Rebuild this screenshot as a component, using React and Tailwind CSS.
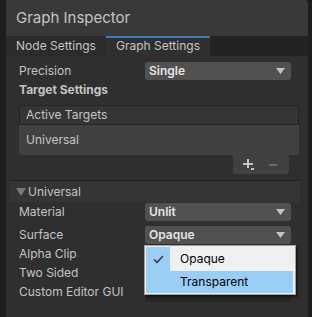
import React from "react";

function Caret() {
  return (
    <svg width="9" height="6" viewBox="0 0 9 6" className="shrink-0">
      <path d="M0 0 H9 L4.5 6 Z" fill="#c4c4c4" />
    </svg>
  );
}

function Dropdown({ value }) {
  return (
    <div className="flex h-[18px] w-[146px] items-center justify-between rounded-[3px] bg-[#515151] pl-[4px] pr-[6px] text-[12px] font-semibold text-[#e4e4e4]">
      <span>{value}</span>
      <Caret />
    </div>
  );
}

function Row({ label, children }) {
  return (
    <div className="flex h-[20px] items-center pl-[13px] pr-[17px]">
      <span className="w-[126px] text-[12px] text-[#c4c4c4]">{label}</span>
      {children}
    </div>
  );
}

export default function App() {
  return (
    <div
      className="flex h-[317px] w-[312px] bg-[#1e1e1e] pl-[6px] pr-[4px]"
      style={{ fontFamily: "Inter, 'Noto Sans', sans-serif" }}
    >
      <div className="relative flex flex-1 flex-col overflow-hidden rounded-tr-[4px] bg-[#2f2f2f]">
        {/* title */}
        <div className="flex h-[36px] items-center bg-[#393939] pl-[10px] text-[15px] text-[#c4c4c4]">
          Graph Inspector
        </div>

        {/* tabs */}
        <div className="flex h-[20px] bg-[#232323] text-[12px] text-[#c4c4c4]">
          <div className="flex w-[100px] items-center justify-center bg-[#2b2b2b]">Node Settings</div>
          <div className="flex w-[104px] items-center justify-center border-t-2 border-[#3a79bb] bg-[#2f2f2f] pb-[2px]">
            Graph Settings
          </div>
        </div>

        <div className="mt-[6px] flex h-[18px] items-center pl-[13px] pr-[17px]">
          <span className="w-[126px] text-[12px] text-[#c4c4c4]">Precision</span>
          <Dropdown value="Single" />
        </div>
        <div className="flex h-[20px] items-center pl-[13px] text-[12px] font-bold text-[#c4c4c4]">
          Target Settings
        </div>

        {/* active targets list */}
        <div className="ml-[13px] mr-[9px] mt-[5px] flex flex-col">
          <div className="flex h-[19px] items-center rounded-t-[3px] border border-b-0 border-[#232323] bg-[#353535] pl-[6px] text-[12px] text-[#c4c4c4]">
            Active Targets
          </div>
          <div className="flex h-[31px] items-center rounded-b-[3px] border-t border-[#232323] bg-[#414141] pl-[7px] text-[12px] text-[#c4c4c4]">
            Universal
          </div>
          <div className="mr-[10px] flex h-[19px] w-[56px] items-center self-end rounded-b-[3px] bg-[#414141] pl-[10px]">
            <svg width="13" height="12" viewBox="0 0 13 12">
              <path d="M0 4 H10 V6 H0 Z M4 0 H6 V9 H4 Z" fill="#c4c4c4" />
              <path d="M8 9 H11 V11 H8 Z" fill="#c4c4c4" />
            </svg>
            <span className="ml-[13px] h-[2px] w-[8px] bg-[#6a6a6a]" />
          </div>
        </div>

        {/* universal foldout */}
        <div className="ml-[4px] mr-[8px] mt-[6px] flex h-[22px] items-center border-t border-[#232323] bg-[#353535] pl-[6px] text-[12px] text-[#c4c4c4]">
          <svg width="10" height="8" viewBox="0 0 10 8" className="mr-[2px]">
            <path d="M0 0 H10 L5 8 Z" fill="#7a7a7a" />
          </svg>
          Universal
        </div>
        <div className="flex flex-col">
          <Row label="Material">
            <Dropdown value="Unlit" />
          </Row>
          <div className="h-[3px]" />
          <Row label="Surface">
            <Dropdown value="Opaque" />
          </Row>
          <div className="-mt-[1px] flex h-[19px] items-center pl-[13px] text-[12px] text-[#c4c4c4]">Alpha Clip</div>
          <div className="flex h-[19px] items-center pl-[13px] text-[12px] text-[#c4c4c4]">Two Sided</div>
          <Row label="Custom Editor GUI">
            <div className="h-[20px] w-[146px] rounded-[3px] bg-[#262626]" />
          </Row>
        </div>

        {/* popup menu */}
        <div className="absolute left-[138px] top-[245px] flex w-[152px] flex-col border border-[#a0a0a0] bg-[#f0f0f0] p-[1px] pr-[2px] text-[12px] text-[#000] shadow-[2px_2px_2px_rgba(0,0,0,0.5)]">
          <div className="flex h-[24px] items-center">
            <div className="flex h-full w-[24px] items-center justify-center bg-[#99cef5]">
              <svg width="11" height="9" viewBox="0 0 11 9">
                <path d="M1 4.5 L4 7.5 L10 1" fill="none" stroke="#333" strokeWidth="1.5" />
              </svg>
            </div>
            <span className="pl-[10px]">Opaque</span>
          </div>
          <div className="flex h-[22px] items-center bg-[#99cef5] pl-[34px]">Transparent</div>
        </div>
      </div>
    </div>
  );
}
